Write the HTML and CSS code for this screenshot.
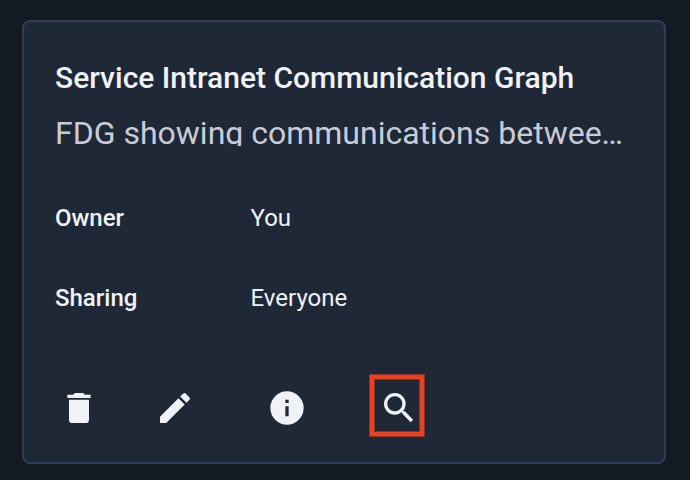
FILE: index.html
```html
<!DOCTYPE html>
<html lang="en">
<head>
<meta charset="utf-8">
<title>Service Intranet Communication Graph</title>
<link rel="stylesheet" href="styles.css">
</head>
<body>
<article class="card">
  <h2 class="title">Service Intranet Communication Graph</h2>
  <p class="subtitle">FDG showing communications between services</p>
  <dl class="details">
    <dt>Owner</dt><dd>You</dd>
    <dt>Sharing</dt><dd>Everyone</dd>
  </dl>
  <div class="actions">
    <button class="action trash" aria-label="Delete"><svg viewBox="0 0 24 24"><path d="M6 19a2 2 0 0 0 2 2h8a2 2 0 0 0 2-2V7H6v12zM19 4h-3.500l-1-1h-5l-1 1H5v2h14V4z"/></svg></button>
    <button class="action edit" aria-label="Edit"><svg viewBox="0 0 24 24"><path d="M3 17.250V21h3.750L17.810 9.940l-3.750-3.750L3 17.250zM20.710 7.040a1 1 0 0 0 0-1.410l-2.340-2.340a1 1 0 0 0-1.410 0l-1.830 1.830 3.750 3.750 1.830-1.830z"/></svg></button>
    <button class="action info" aria-label="Information"><svg viewBox="0 0 24 24"><path d="M12 2a10 10 0 1 0 0 20 10 10 0 0 0 0-20zm1 15h-2v-6h2v6zm0-8h-2V7h2v2z"/></svg></button>
    <button class="action search" aria-label="Search"><svg viewBox="0 0 24 24"><path d="M15.500 14h-.79l-.28-.27A6.471 6.471 0 0 0 16 9.500 6.500 6.500 0 1 0 9.500 16c1.610 0 3.090-.59 4.230-1.570l.27.28v.79l5 4.990L20.490 19l-4.990-5zm-6 0C7.010 14 5 11.990 5 9.500S7.010 5 9.500 5 14 7.010 14 9.500 11.990 14 9.500 14z"/></svg></button>
  </div>
</article>
</body>
</html>
```
FILE: styles.css
```css
* { box-sizing: border-box; }
body {
  margin: 0;
  height: 480px;
  padding: 20px 24px 16px 22px;
  overflow: hidden;
  background: #141a24;
  font-family: Roboto, sans-serif;
  color: #f0f2f7;
}
.card {
  height: 444px;
  padding: 36px 31px 0;
  border: 2px solid #2e3e58;
  border-radius: 8px;
  background: #1f2836;
}
.title {
  margin: 0;
  font-size: 30px;
  line-height: 40px;
  font-weight: 500;
  white-space: nowrap;
}
.subtitle {
  margin: 18px 0 0;
  height: 30px;
  overflow: hidden;
  text-overflow: ellipsis;
  white-space: nowrap;
  font-size: 32px;
  line-height: 34px;
  color: #c8ccd9;
}
.details {
  display: grid;
  grid-template-columns: 195.5px 1fr;
  grid-template-rows: 80px 80px;
  align-items: center;
  margin: 32px 0 0;
  font-size: 24px;
}
.details dt { font-weight: 500; }
.details dd { margin: 0; }
.actions {
  display: flex;
  align-items: flex-start;
  height: 64px;
  margin-top: 36px;
}
.action {
  display: block;
  margin-top: 14px;
  padding: 0;
  border: 0;
  background: none;
  color: inherit;
}
.action svg {
  display: block;
  width: 40px;
  height: 40px;
  fill: currentColor;
}
.trash { margin-left: 4px; }
.edit { margin-left: 56px; }
.info { margin-left: 72px; }
.search {
  width: 54px;
  height: 61px;
  margin: 1px 0 0 63px;
  padding: 9px 0 4px 5px;
  border: 4px solid #ec4020;
  box-shadow: 0 0 0 1px rgba(236, 64, 32, 0.5), inset 0 0 0 1px rgba(236, 64, 32, 0.5);
}
```
